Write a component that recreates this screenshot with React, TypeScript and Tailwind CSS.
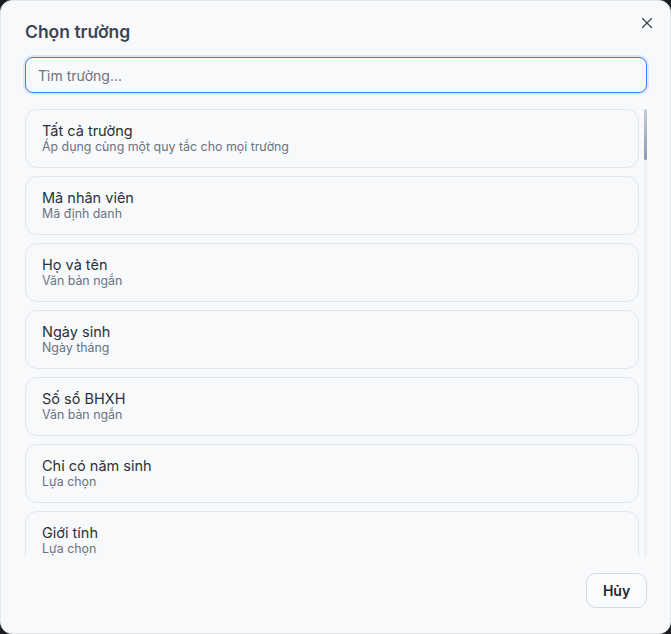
import { X } from "lucide-react";

const fields = [
  { name: "Tất cả trường", type: "Áp dụng cùng một quy tắc cho mọi trường" },
  { name: "Mã nhân viên", type: "Mã định danh" },
  { name: "Họ và tên", type: "Văn bản ngắn" },
  { name: "Ngày sinh", type: "Ngày tháng" },
  { name: "Số sổ BHXH", type: "Văn bản ngắn" },
  { name: "Chỉ có năm sinh", type: "Lựa chọn" },
  { name: "Giới tính", type: "Lựa chọn" },
];

export default function App() {
  return (
    <div className="h-[634px] w-[671px] bg-[#1c1d20] font-['Inter','Noto_Sans',sans-serif]">
      <div className="flex h-full w-full flex-col rounded-xl border border-[#e3e6ea] bg-[#f8f9fb] pl-6 pr-[23px] pt-[17px]">
        <header className="flex items-start justify-between">
          <h1 className="text-[17.5px] leading-7 font-semibold text-[#3d4553]">Chọn trường</h1>
          <button className="-mr-[9px] mt-[-4px] text-[#3f4652]">
            <X size={18} strokeWidth={1.7} />
          </button>
        </header>

        <input
          autoFocus
          placeholder="Tìm trường..."
          className="mt-[11px] h-9 w-full rounded-lg border border-[#3b82f6] bg-[#f8f9fb] px-3 text-sm text-[#1f2937] outline-none ring-2 ring-[#3b82f6]/15 placeholder:text-[#6b7280]"
        />

        <div className="mt-4 flex h-[447px] gap-[5px]">
          <ul className="flex flex-1 flex-col gap-2 overflow-hidden">
            {fields.map((f) => (
              <li
                key={f.name}
                className="h-[59px] shrink-0 rounded-xl border border-[#e3e6ea] bg-[#f8f9fb] px-4 pt-[11px]"
              >
                <div className="text-[14.5px] leading-[19px] text-[#2a313c]">{f.name}</div>
                <div className="text-[12.4px] leading-[14px] text-[#6b7280]">{f.type}</div>
              </li>
            ))}
          </ul>
          <div className="w-[3px] rounded-full bg-[#eef1f5]">
            <div className="h-[51px] w-full rounded-full bg-gradient-to-b from-[#c3ccd9] to-[#8e9bb0]" />
          </div>
        </div>

        <footer className="mt-[17px] flex justify-end">
          <button className="h-[35px] w-[61px] rounded-[10px] border border-[#d5d9df] bg-[#fafbfc] text-sm font-semibold text-[#1f2530]">
            Hủy
          </button>
        </footer>
      </div>
    </div>
  );
}
